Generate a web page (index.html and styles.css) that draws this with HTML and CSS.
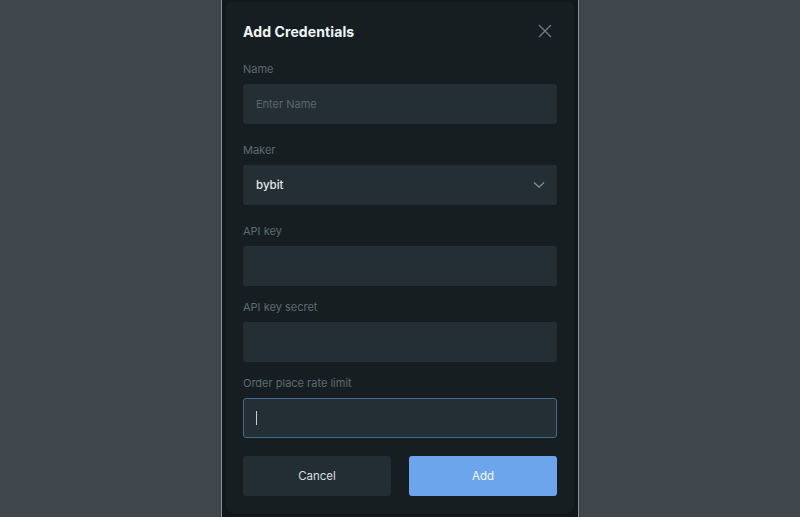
FILE: index.html
```html
<!DOCTYPE html>
<html>
<head>
<meta charset="utf-8">
<link rel="stylesheet" href="styles.css">
</head>
<body>
<div class="column">
  <div class="modal">
    <div class="header">
      <h1 class="title">Add Credentials</h1>
      <svg class="close" width="16" height="16" viewBox="0 0 16 16"><path d="M2 2 L14 14 M14 2 L2 14" stroke="#6d7b82" stroke-width="1.4" fill="none"/></svg>
    </div>
    <div class="field f-name">
      <div class="label">Name</div>
      <div class="input"><span class="placeholder">Enter Name</span></div>
    </div>
    <div class="field f-wide">
      <div class="label">Maker</div>
      <div class="input select"><span class="value">bybit</span>
        <svg width="12" height="8" viewBox="0 0 12 8"><path d="M1 1.5 L6 6 L11 1.5" stroke="#7d8a90" stroke-width="1.5" fill="none"/></svg>
      </div>
    </div>
    <div class="field f-wide">
      <div class="label">API key</div>
      <div class="input"></div>
    </div>
    <div class="field f-narrow">
      <div class="label">API key secret</div>
      <div class="input"></div>
    </div>
    <div class="field f-narrow">
      <div class="label">Order place rate limit</div>
      <div class="input focused"><span class="caret"></span></div>
    </div>
    <div class="actions">
      <button class="btn cancel">Cancel</button>
      <button class="btn add">Add</button>
    </div>
  </div>
</div>
</body>
</html>
```
FILE: styles.css
```css
html, body {
  margin: 0;
  padding: 0;
  height: 100%;
}
body {
  background: #3f474c;
  font-family: Inter, "Noto Sans", sans-serif;
  display: flex;
  justify-content: center;
}
.column {
  width: 358px;
  height: 517px;
  background: #10181b;
  border-left: 1px solid #8a9296;
  border-right: 1px solid #8a9296;
  padding: 2px 4px 0;
  box-sizing: border-box;
}
.modal {
  background: #161e21;
  border-radius: 6px;
  padding: 19px 17px 17px;
  height: 511px;
  box-sizing: border-box;
}
.header {
  display: flex;
  align-items: center;
  justify-content: space-between;
  height: 20px;
}
.title {
  margin: 0;
  font-size: 14px;
  font-weight: 700;
  color: #f1f4f5;
  letter-spacing: 0.1px;
}
.close {
  margin-right: 4px;
}
.field .label {
  font-size: 11px;
  line-height: 14px;
  color: #5e6b71;
  margin-bottom: 8px;
}
.f-name { margin-top: 21px; }
.f-wide { margin-top: 19px; }
.f-narrow { margin-top: 14px; }
.input {
  height: 40px;
  background: #232f34;
  border-radius: 3px;
  box-sizing: border-box;
  padding: 0 13px;
  display: flex;
  align-items: center;
  font-size: 11px;
}
.placeholder { color: #5a686e; }
.value { color: #e4e8ea; font-size: 11.5px; font-weight: 500; }
.select { justify-content: space-between; padding-right: 12px; }
.focused {
  border: 1px solid #3f6a94;
  padding-left: 12px;
}
.caret {
  width: 1px;
  height: 14px;
  background: #c9d0d3;
}
.actions {
  margin-top: 18px;
  display: flex;
  gap: 18px;
}
.btn {
  flex: 1;
  height: 40px;
  border: none;
  border-radius: 3px;
  font-family: Inter, "Noto Sans", sans-serif;
  font-size: 11.5px;
  font-weight: 400;
}
.cancel { background: #222e33; color: #d9dee0; }
.add { background: #6ca5ec; color: #f5f9ff; }
```
